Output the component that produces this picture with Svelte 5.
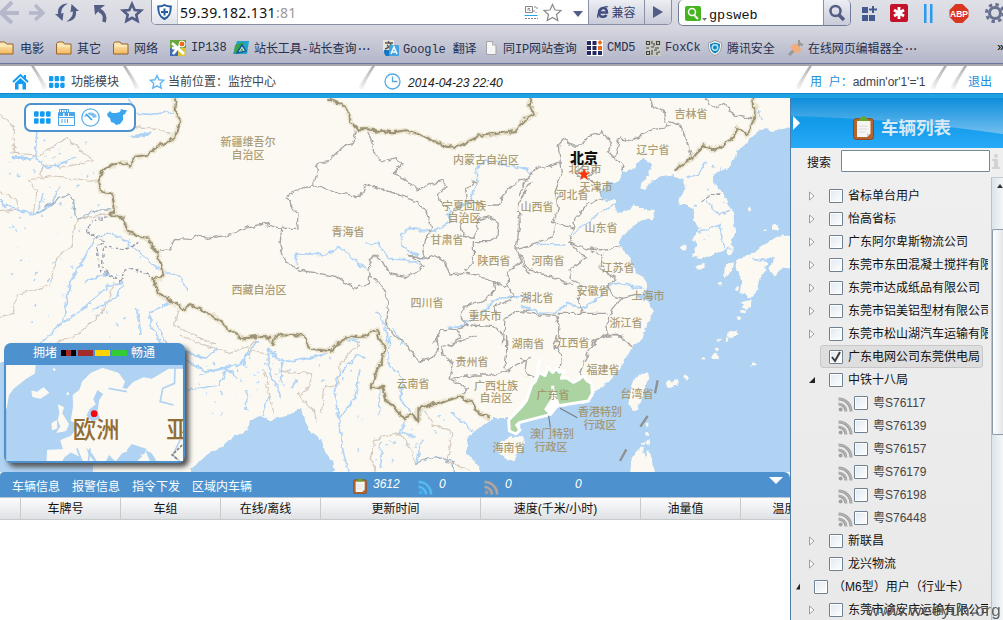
<script>
  const bookmarks = [
    { kind: 'folder', w: 58, g: 22, text: '电影' },
    { kind: 'folder', w: 57, g: 21, text: '其它' },
    { kind: 'folder', w: 57, g: 21, text: '网络' },
    { kind: 'ip', w: 63, g: 21, text: 'IP138' },
    { kind: 'tool', w: 150, g: 21, text: '站长工具-站长查询', more: true },
    { kind: 'google', w: 102, g: 20, text: 'Google 翻译' },
    { kind: 'doc', w: 102, g: 18, text: '同IP网站查询' },
    { kind: 'cmd', w: 58, g: 20, text: 'CMD5' },
    { kind: 'qr', w: 63, g: 20, text: 'FoxCk' },
    { kind: 'guard', w: 80, g: 19, text: '腾讯安全' },
    { kind: 'hammer', w: 203, g: 20, text: '在线网页编辑器全', more: true }
  ];
  const tree = [
    { t: '省标单台用户', a: 1 }, { t: '怡高省标', a: 1 }, { t: '广东阿尔卑斯物流公司', a: 1 },
    { t: '东莞市东田混凝土搅拌有限公司', a: 1 }, { t: '东莞市达成纸品有限公司', a: 1 },
    { t: '东莞市铝美铝型材有限公司', a: 1 }, { t: '东莞市松山湖汽车运输有限公司', a: 1 },
    { t: '广东电网公司东莞供电局', sel: true }, { t: '中铁十八局', a: 2 },
    { t: '粤S76117', kid: true }, { t: '粤S76139', kid: true }, { t: '粤S76157', kid: true },
    { t: '粤S76179', kid: true }, { t: '粤S76198', kid: true }, { t: '粤S76448', kid: true },
    { t: '新联昌', a: 1 }, { t: '龙兴物流', a: 1 }, { t: '（M6型）用户（行业卡）', top: true },
    { t: '东莞市渝安庆运输有限公司', a: 1 }
  ];
  const columns = [
    ['', 21], ['车牌号', 100], ['车组', 100], ['在线/离线', 100], ['更新时间', 160],
    ['速度(千米/小时)', 160], ['油量值', 100], ['温度值', 110]
  ];
  const labels = [
    ['新疆维吾尔', 248, 142], ['自治区', 248, 155], ['内蒙古自治区', 486, 160], ['青海省', 348, 232],
    ['宁夏回族', 464, 206], ['自治区', 464, 218], ['甘肃省', 447, 240], ['陕西省', 494, 261],
    ['西藏自治区', 259, 290], ['四川省', 427, 303], ['重庆市', 485, 316], ['吉林省', 691, 114],
    ['辽宁省', 653, 150], ['北京市', 585, 169], ['天津市', 596, 187], ['河北省', 572, 195],
    ['山西省', 537, 207], ['山东省', 601, 228], ['河南省', 548, 261], ['江苏省', 618, 268],
    ['安徽省', 593, 291], ['湖北省', 537, 298], ['上海市', 648, 296], ['浙江省', 626, 323],
    ['湖南省', 528, 344], ['江西省', 573, 343], ['福建省', 603, 370], ['贵州省', 472, 362],
    ['云南省', 413, 384], ['广西壮族', 496, 386], ['自治区', 496, 398], ['广东省', 553, 395],
    ['台湾省', 637, 394], ['香港特别', 600, 412], ['行政区', 600, 425], ['澳门特别', 552, 434],
    ['行政区', 551, 447], ['海南省', 509, 448]
  ];
  // Map tiles: every tile is drawn in thirds of a pixel from its own origin.
  const tiles = [
    {
      x: 0, y: 95,
      border: ['525,10 528,50 540,75 525,130 480,150 440,180 405,185 390,215 365,203 335,212 308,225 295,260 305,292 335,295 342,325 345,350 325,355 370,370 380,405 420,425 445,428 455,455 475,475 480,505 490,540 480,552 460,548 472,590 500,612 530,628 555,645 565,630 600,640 655,675 685,705 730,730 780,725'],
      prov: ['810,385 745,395 690,420 620,430 600,418 570,433 525,430 508,465 480,468'],
      dash: ['325,365 275,375 260,408 310,440 292,460 298,525 360,558 375,525 400,520 455,545', '418,442 370,463 310,455 308,510 325,540'],
      river: ['110,110 105,185 145,220 230,185', '35,185 90,190 105,180', '0,320 50,345 110,358 150,335 180,275', '110,358 130,295', '330,415 290,425 270,460 240,510 210,560 190,680 115,750', '335,415 380,440 470,520 540,545 565,590', '370,560 320,575 250,640 190,685', '410,640 420,720', '510,625 450,650 450,690 490,750', '410,55 450,58 530,50', '470,680 500,750', '330,535 250,560', '385,10 400,40', '0,315 20,340', '370,565 345,610 280,645'],
      tan: ['0,55 40,95 40,175 120,180 200,130 240,160', '85,255 150,245 290,258', '85,255 110,290 100,355', '345,355 240,370 220,400 215,450 170,490 150,570 50,600 40,655 0,665', '400,95 470,100 520,125', '120,250 130,210 200,215 280,195 240,165', '345,560 310,650 230,720 170,745', '540,640 520,690 600,730 650,750', '0,350 55,345 50,315 0,290'],
      blue: ['110,355 125,345 180,310 205,297 220,310 225,355 232,375 290,345 340,345']
    },
    {
      x: 260, y: 95,
      border: ['205,10 255,35 275,85 295,103 320,103 400,112 440,106 485,120 540,148 590,157 660,122 700,118 765,108 790,80 810,68', '0,725 30,728 38,750', '40,730 70,718 130,722 150,762'],
      prov: ['290,105 280,145 250,155 200,200 175,205 165,260 155,270', '320,103 340,150 340,170 365,200 410,188 425,210 400,235 430,250 475,285 515,265 550,255 558,275 535,295 545,330 570,345', '80,300 155,270 230,290 300,308 315,268 375,285 420,300 470,320 500,350 515,400 500,430 485,470 495,490 520,480 555,500 570,540 620,535 650,540 700,560 745,578 765,605 725,625 700,635 710,655', '80,300 95,340 115,355 110,400 65,400 0,385', '65,400 60,450 75,500 120,525 230,545 285,580 325,565 330,540 325,510 345,480 370,500 390,535 435,545 470,530 495,510 445,480 495,490', '330,540 365,570 385,620 380,690 400,720 440,750', '650,265 640,258 615,290 620,320 660,325 690,330 715,330 730,300 770,260 810,250', '600,380 610,420 640,430 655,400 650,375 690,365 715,385 710,425 690,440 640,440 640,500 615,530', '810,260 775,330 778,400 768,460 785,500 745,530 745,578', '768,460 810,450', '785,500 810,540', '700,560 705,585 670,620 610,635 600,665 625,690 590,700 545,705 520,745', '590,700 600,730 570,750', '730,750 735,670 770,650 810,645', '630,690 700,695 730,720'],
      dash: [],
      river: ['315,447 355,445 385,490 440,495 490,512', '490,495 425,450 425,415 450,400 515,410 575,380 565,355 630,320 650,270 650,220 680,195 740,210 810,225', '110,508 108,475 200,480 235,455 270,480 325,530', '565,698 610,690 650,665 710,610 780,605 810,610', '350,650 375,690 385,750', '235,750 270,730 300,745', '400,700 430,750'],
      tan: [], blue: []
    },
    {
      x: 520, y: 95,
      border: ['0,95 15,72 45,55 28,35 35,8', '700,8 705,70 690,100 680,120 655,98 640,125 610,150 580,165 550,150 520,188 490,205 467,228'],
      prov: ['390,10 400,35 430,50 435,75 445,95', '555,10 580,40 615,25 640,60 700,72', '445,80 480,90 500,140 515,185', '445,95 400,100 360,125 320,140 300,125 285,190 310,210 310,232', '285,190 265,170 275,140 245,112 205,125 185,150 150,150 135,130 115,150 120,200 80,215 50,220 20,250 0,300', '120,200 125,240 105,290 115,340 100,380 160,400 165,370 200,330 250,310', '160,400 145,440 200,462 260,465 295,450', '105,385 100,425 0,460', '145,440 200,490 150,520 155,555 180,570 175,610 185,655 260,655', '200,462 245,480 240,520 290,550 265,570 275,600 305,610 350,600', '305,610 280,640 260,690 265,720 310,725', '0,480 30,525 110,550 160,570', '0,650 60,660 110,665 120,655 185,655', '110,665 120,690 115,750', '265,720 220,740 215,750', '190,215 165,230 180,250 215,240 225,220', '200,250 225,265 245,300'],
      dash: ['545,320 565,303 605,295'],
      river: ['0,215 25,220 25,240', '285,325 240,355 190,390 160,420', '50,448 140,450', '0,630 60,655 105,655 140,625 190,640 215,625 280,565 370,580', '560,320 600,360 630,345', '535,410 600,390 610,460', '500,250 535,240 560,200', '715,45 725,75', '700,490 745,500 760,485'],
      tan: [], blue: []
    },
    {
      x: 0, y: 335,
      border: [],
      prov: [],
      dash: [],
      river: ['550,70 620,110 680,100 710,130', '600,120 680,95 720,90 770,20', '550,50 620,70 650,40', '730,90 740,50', '680,100 660,150 560,165', '740,165 735,225'],
      tan: ['540,0 600,25 690,55 740,35', '780,0 740,45 810,60', '790,110 810,150'], blue: []
    },
    {
      x: 260, y: 335,
      border: ['38,30 45,5', '150,42 210,48 240,20 270,5 310,5 325,0 350,-15 360,15 375,30 365,80 345,115 335,160 370,155 380,200 400,210 430,250 460,240 475,260 475,220 530,205 600,185 640,205 655,235 690,248'],
      prov: ['440,30 475,80 515,70 535,40 530,0', '650,0 600,20 545,35 550,60 580,90 570,130 625,160 600,185', '575,130 640,120 700,120 740,105 810,70', '740,0 740,50 735,100'],
      dash: [],
      river: ['20,40 60,75 100,80 200,55 240,20 300,10', '65,80 65,150', '25,50 30,110 65,190', '315,70 290,60 230,130 225,190 240,260 245,330 265,410', '390,0 385,90 430,130 420,190 455,240', '470,310 420,290 440,250', '490,310 470,380', '360,320 365,400', '575,230 640,290', '300,100 285,190 240,250', '10,240 25,180', '115,130 95,160', '360,160 355,240'],
      tan: ['70,110 155,115 150,150 115,180 160,230 170,260', '300,20 240,90 235,150 190,160 185,230', '490,220 520,270 580,290 560,380 640,411', '470,390 450,340 420,295 345,310 330,370 350,411', '20,150 40,240'],
      blue: ['465,385 525,365 580,380 580,411']
    },
    {
      x: 520, y: 335,
      border: [],
      prov: ['110,0 100,30 125,60 120,100', '0,70 20,75 15,110 40,130', '250,0 210,40 190,90 180,130', '250,5 300,0 340,40'],
      dash: [], river: [], tan: [], blue: []
    }
  ];
  const coast = '790,127 773,131 765,128 756,132 747,142 738,150 736,158 725,169 713,175 713,182 722,193 733,212 735,232 730,247 720,252 712,255 703,258 692,257 697,247 693,238 698,228 693,217 695,210 688,205 678,205 679,197 687,188 683,180 675,175 663,177 653,180 643,190 639,188 648,175 652,165 645,158 637,163 632,170 623,172 618,183 608,183 600,195 607,201 615,200 615,207 617,213 628,210 635,205 645,210 655,211 652,218 638,222 632,228 625,233 618,245 628,255 635,272 645,280 647,291 637,295 648,302 653,312 647,325 643,337 630,350 618,372 608,382 595,393 588,402 555,407 548,413 520,423 518,433 512,435 509,418 493,418 480,427 467,438 467,453 480,468 481,472 790,472';
  const bengal = '260,416 270,420 290,415 300,409 305,418 310,432 322,440 325,452 332,460 334,472 190,472 200,460 213,452 233,438 248,430 250,420';
  const specks = [];
  let seed = 17;
  const rnd = () => (seed = (seed * 1103515245 + 12345) % 2147483648) / 2147483648;
  function scatter(n, x, y, w, h) {
    for (let i = 0; i < n; i++) {
      const px = x + rnd() * w, py = y + rnd() * h;
      specks.push(`M${px.toFixed(1)} ${py.toFixed(1)}l${(rnd() * 3 - 0.5).toFixed(1)} ${(-rnd() * 2.4).toFixed(1)}`);
    }
  }
  scatter(42, 5, 140, 95, 95);
  scatter(34, 5, 240, 135, 100);
  scatter(26, 188, 350, 70, 70);
  scatter(28, 262, 350, 90, 55);
  scatter(24, 340, 410, 120, 58);
  scatter(16, 685, 165, 40, 80);
  const isles = [[749, 209, 2], [775, 227, 3], [765, 230, 1.5], [684, 248, 2.5], [730, 252, 2.5], [731, 247, 2], [747, 305, 4], [743, 311, 2], [739, 318, 2], [734, 333, 3], [727, 340, 2], [720, 284, 1.5], [737, 289, 2], [731, 335, 3], [715, 357, 3], [717, 350, 2], [719, 340, 1.5], [703, 359, 1.5], [754, 365, 1.5], [670, 384, 4], [675, 382, 2.5], [686, 378, 2.5], [646, 425, 1.5], [647, 433, 2], [643, 444, 2], [648, 443, 2], [641, 450, 2.5], [648, 454, 2.5]];
</script>

{#snippet rss(color)}
  <svg class="rss" width="15" height="15" viewBox="0 0 15 15" fill="none" stroke={color}>
    <circle cx="2.6" cy="12.6" r="2" fill={color} stroke="none" />
    <path d="M.5 7c4 0 7.400 3.200 7.400 7.400M.5 2c7 0 12.500 5.400 12.500 12.400" stroke-width="3" />
    <path d="M.5 6.800c4 0 7.600 3.400 7.600 7.600M.5 1.800c7 0 12.700 5.400 12.700 12.600" stroke="#fff" stroke-opacity=".35" stroke-width=".7" />
  </svg>
{/snippet}

{#snippet clip(size)}
  <svg width={size} height={size * 1.15} viewBox="0 0 21 24">
    <rect x=".5" y="2.500" width="20" height="21" rx="3" fill="#b4642c" stroke="#8e481d" />
    <path d="M4 5h13.500v12.500L14 21H4z" fill="#f6f6f4" />
    <path d="M5.500 10h9M5.500 13h9M5.500 16h7" stroke="#cfd2d2" stroke-width=".8" />
    <path d="M14 21v-3.500h3.500" fill="#d5d5d5" />
    <path d="M5.500 5C6 2 8.500 2 9 .8q1.500-1 3 0c.5 1.200 3 1.200 3.500 4.200z" fill="#63a82b" />
  </svg>
{/snippet}

{#snippet grid(size)}
  <svg width={size} height={size * 0.78} viewBox="0 0 17 13" fill="#149cf3">
    {#each [0, 6, 12] as gx}{#each [0, 7] as gy}<rect x={gx} y={gy} width="4.600" height="5.500" rx="1.200" />{/each}{/each}
  </svg>
{/snippet}

{#snippet slash(flip)}
  <svg class="slash" class:flip width="22" height="28" viewBox="0 0 22 28">
    <path d="M2 0H5L18 20V23H14Q11 14 2 0Z" fill="url(#fold)" />
  </svg>
{/snippet}

<svg class="defs" width="0" height="0">
  <defs>
    <linearGradient id="fold" x1="0" y1="0" x2=".9" y2="1"><stop offset="0" stop-color="#aaa" /><stop offset="1" stop-color="#f5f5f5" /></linearGradient>
    <linearGradient id="fd" x1="0" y1="0" x2="0" y2="1"><stop offset="0" stop-color="#fff0c0" /><stop offset="1" stop-color="#f3b75f" /></linearGradient>
    <filter id="rough" filterUnits="userSpaceOnUse" x="0" y="90" width="800" height="390" color-interpolation-filters="sRGB">
      <feTurbulence type="fractalNoise" baseFrequency=".16" numOctaves="2" seed="4" />
      <feDisplacementMap in="SourceGraphic" scale="6" xChannelSelector="R" yChannelSelector="G" />
    </filter>
  </defs>
</svg>

<div class="page">
  <div class="chrome">
    <div class="toolbar">
      <svg class="nav" width="151" height="26" viewBox="0 0 151 26" fill="none">
        <path d="M12 2 1 13l11 10M2 13h17" stroke="#b4b8ca" stroke-width="4" />
        <path d="m35 5 8 8-8 7M29 13h13" stroke="#b4b8ca" stroke-width="3.500" />
        <path d="M68 3.500Q57 4 58 14l-3 0 7.500 7 1-8-2.500.5Q61 7 68 3.500z" fill="#535d85" />
        <path d="M66 21.500Q77 21 76 11l3 0-7.500-7-1 8 2.500-.5Q73 18 66 21.500z" fill="#535d85" />
        <path d="M104 22c2-6 0-9-5-12" stroke="#535d85" stroke-width="3.800" /><path d="M94 5h11q-2 2-4 3l-6 7z" fill="#535d85" />
        <path d="m132 4 2.700 6 6.300.6-4.700 4.200 1.300 6.200-5.600-3.200-5.600 3.200 1.300-6.200-4.700-4.200 6.300-.6z" stroke="#535d85" stroke-width="2.600" />
      </svg>
      <div class="address">
        <span class="shield"><svg width="15" height="16" viewBox="0 0 15 16"><path d="M7.500 1C5 2.500 3 2.500 1.200 2.500c0 6 1 10 6.300 12.500 5.300-2.500 6.300-6.500 6.300-12.500C12 2.500 10 2.500 7.500 1z" fill="#fff" stroke="#265e9d" stroke-width="2" /><path d="M7.500 4.500v7M4 8h7" stroke="#265e9d" stroke-width="2" /></svg></span>
        <span class="url">59.39.182.131<i>:81</i></span>
        <svg width="64" height="24" viewBox="524 0 64 24" fill="none"><path d="M525.500 6.500h7v6h-7z" stroke="#888" /><path d="M528 8.500h2v2h-2zM535 6v2M537 7v3M534 10v3M536 12v1M525 18.500h13" stroke="#888" stroke-dasharray="2 1" /><path d="M524.500 15.500h13" stroke="#23a5e5" /><path d="m552.500 4.500 2.500 5.500 6 .5-4.500 4 1.300 6-5.300-3-5.300 3 1.300-6-4.500-4 6-.5z" stroke="#898989" stroke-width="1.200" /><path d="M573 11h10l-5 6z" fill="#535d85" /></svg>
        <span class="compat"><svg width="12" height="14" viewBox="0 0 12 14" fill="none" stroke="#414f80" stroke-width="2.500"><path d="M2 7.500h8C10 1 2 2 2 7.500s6 5 7.500 2.500" /><path d="M1 13C-1 9 7 0 11 2" stroke-width="1.200" /></svg><span>兼容</span></span>
        <span class="play"><svg width="10" height="12"><path d="M0 0v12l10-6z" fill="#535d85" /></svg></span>
      </div>
      <div class="finder">
        <svg width="24" height="24" viewBox="0 0 24 24" fill="none"><rect x="1" y="5" width="16" height="15" rx="2" fill="#45b41e" /><circle cx="8" cy="11" r="3.500" stroke="#fff" stroke-width="1.500" /><path d="m10 14 4 4" stroke="#fff" stroke-width="2" /><path d="M18 17h5l-2.500 3z" fill="#777" /></svg>
        <span>gpsweb</span>
        <b><svg width="18" height="19" fill="none" stroke="#535d85"><circle cx="7.500" cy="8" r="5" stroke-width="2.500" /><path d="m11 12 5 5" stroke-width="3.500" /></svg></b>
      </div>
      <svg width="151" height="26" viewBox="852 0 151 26">
        <path d="M862 7h6v6h-6zm0 8h6v6h-6zm7 0h6v6h-6zM872 6h2v2.500h3v2h-3V13h-2v-2.500h-3v-2h3z" fill="#455a91" />
        <rect x="890" y="4" width="18" height="18" rx="2" fill="#c3122a" /><path d="M899 7v12M894 10l10 6M904 10l-10 6" stroke="#fff" stroke-width="2.800" />
        <path d="M924 4h2.500v19H924zM930 4h2.500v19H930z" fill="#2a9aec" />
        <path d="M955.500 4h7l6 6v7l-6 6h-7l-6-6v-7z" fill="#d93621" /><text x="959" y="16.500" text-anchor="middle" font-family="Liberation Sans" font-size="8.500" font-weight="bold" fill="#fff">ABP</text>
        <circle cx="995" cy="13" r="8.500" fill="none" stroke="#68708f" stroke-width="3" stroke-dasharray="3.400 3.300" /><circle cx="995" cy="13" r="5.500" fill="none" stroke="#68708f" stroke-width="3" />
      </svg>
    </div>
    <div class="marks">
      {#each bookmarks as b}
        <div class="mark" style="width:{b.w}px">
          <span style="width:{b.g}px">
            <svg width="16" height="16" viewBox="0 0 16 16">
              {#if b.kind === 'folder'}
                <path d="M.5 3.500 2 2h5l1.500 2H15v10H.5z" fill="url(#fd)" stroke="#98652f" /><path d="M2 6h12" stroke="#fff3cf" />
              {:else if b.kind === 'ip'}
                <path d="M0 0h16v16H0z" fill="#68a83b" /><path d="M0 8h8v8H0z" fill="#426db4" /><path d="M8 8h8v8H8z" fill="#d8c63b" /><path d="M2 3 14 14M3 14l8-10M2 8l8 1" stroke="#fff" stroke-width="2.700" /><circle cx="12" cy="4" r="3" fill="#ef6b22" stroke="#fff" />
              {:else if b.kind === 'tool'}
                <path d="M4 1h12l-2 13H0z" fill="#20a4c8" /><path d="M2 5 11 2 8 13H1z" fill="#36a24c" /><path d="m4 13 5-8 4 6z" fill="#f5fae6" stroke="#17579a" stroke-width="1.500" /><path d="m7 11 2-3 1.500 2.500z" fill="#36a24c" />
              {:else if b.kind === 'google'}
                <rect width="11" height="11" fill="#e9e7da" /><path d="M2 3h8M5.500 1v2M8 3c0 3-3 5-6 6M4 5l4 4" stroke="#555" stroke-width="1.400" fill="none" /><path d="M1 10h5v4l3-3v5H4q-3 0-3-6z" fill="#1375c5" /><rect x="6" y="5" width="10" height="11" rx="1" fill="#42a3e2" /><path d="m8 14 3-7 3 7M9 12h4" fill="none" stroke="#fff" stroke-width="1.500" />
              {:else if b.kind === 'doc'}
                <path d="M1.500 1.500H7.500l3.500 3.500v9.500H1.500z" fill="#f5f5f5" stroke="#a2a2a8" /><path d="M7.500 1.500V5H11" fill="#ddd" stroke="#aaa" />
              {:else if b.kind === 'cmd'}
                <path d="M0 0h16v16H0z" fill="#fff" /><path d="M0 1h4v4H0zM5.500 1h4v4h-4zM0 6h4v4H0zM5.500 6h4v4h-4zM0 11h4v4H0zM5.500 11h4v4h-4zM11 11h4v4h-4z" fill="#242963" /><path d="M11 6h4v4h-4zM13 0l2.500 2.500L13 5l-2.500-2.500z" fill="#f26a10" />
              {:else if b.kind === 'qr'}
                <path d="M0 0h16v16H0z" fill="#c9c9c4" /><path d="M1.500 1.500h3v3h-3zM11.500 1.500h3v3h-3zM1.500 11.500h3v3h-3zM7 1v3M9 3v3M6 7h3M10 8h4M7 10v5M9 10h3M12 12v3M14 11v2M1 8h3" fill="none" stroke="#44443e" stroke-width="1.100" />
              {:else if b.kind === 'guard'}
                <path d="M7 .5 13.500 3c.4 7-1.500 10-6.500 12.500C2 13 .1 10 .5 3z" fill="#fafafa" stroke="#999" /><path d="M7 2.500 12 4c0 5-1 7.500-5 9.500C3 11.500 2 9 2 4z" fill="#1483bd" /><circle cx="7" cy="7.500" r="2.700" fill="none" stroke="#b0e6fa" stroke-width="1.500" />
              {:else}
                <path d="m1 15 12-12" stroke="#999" stroke-width="3" /><path d="M11 0v4l4 1" fill="none" stroke="#999" stroke-width="2" /><path d="m2 7 6-4 6 7-6 4z" fill="#f2ad7d" />
              {/if}
            </svg>
          </span><p>{b.text}{#if b.more}<i>···</i>{/if}</p>
        </div>
      {/each}
      <em>»</em>
    </div>
  </div>

  <header>
    <svg class="home" width="17" height="17" viewBox="0 0 17 17"><path d="m1 9 7.500-7L16 9M13 2v4" fill="none" stroke="#149cf3" stroke-width="2" /><path d="M8.500 5 14 10v6.500h-3.500V11h-4v5.500H3V10z" fill="#149cf3" /></svg>
    {@render slash(false)}
    <span class="gr">{@render grid(16)}</span>
    <span class="mod">功能模块</span>
    {@render slash(false)}
    <svg class="star" width="16" height="16" viewBox="0 0 16 16"><path d="m8 1.500 2 4.300 4.700.5-3.500 3.200 1 4.700L8 11.800l-4.200 2.400 1-4.700L1.300 6.300l4.700-.5z" fill="none" stroke="#62b6f4" stroke-width="1.400" /></svg>
    <span class="where">当前位置：监控中心</span>
    {@render slash(true)}
    <svg class="clock" width="17" height="17" viewBox="0 0 17 17" fill="none" stroke="#55aae9" stroke-width="1.300"><circle cx="8.500" cy="8.500" r="7.500" /><path d="M8.500 3.500v5h5" /></svg>
    <time>2014-04-23 22:40</time>
    {@render slash(true)}
    <span class="user"><b>用&nbsp; 户：</b>admin'or'1'='1</span>
    {@render slash(true)}{@render slash(true)}
    <span class="exit">退出</span>
  </header>

  <div class="body">
    <main>
      <section class="map">
        <svg class="canvas" width="790" height="374" viewBox="0 98 790 374">
          <rect y="98" width="790" height="374" fill="#fcf9f2" />
          <g filter="url(#rough)">
            <g fill="#b0d2f3">
              <polygon points={coast} /><polygon points={bengal} /><path d="M-5 363H6V460H92V476H-5zM128 136 140 134 152 131 146 137 136 138zM12 156l17 1 3 4-8-1-12-2z" />
              <path d="M790 120h10v357h-10zM330 468h-140v9h146zM480 468h315v9H483z" />
            </g>
            <g fill="#fcf9f2">
              <g transform="translate(520 95) scale(.33333)"><path d="M825 420 770 425 740 445 710 470 670 485 645 500 650 530 665 560 660 590 690 610 710 590 720 545 735 530 740 490 765 490 745 520 765 545 790 515 825 520zM615 510 640 502 632 535 612 545zM525 515 555 505 545 522 530 524zM665 620 695 615 690 638 672 635z" /></g>
              <g transform="translate(520 335) scale(.33333)"><path d="M380 108 385 130 365 185 345 232 330 215 325 185 345 130zM330 420 335 370 350 345 370 350 375 365 390 355 400 385 407 420zM440 145 470 138 455 155z" /></g>
              <path d="m523 436 2 8-11 16-7-1-11-9 5-8 10-5z" />
              {#each isles as [x, y, r]}<circle cx={x} cy={y} r={r} />{/each}
            </g>
            <path d={specks.join('')} fill="none" stroke="#b0d4f7" stroke-width="1.400" />
            {#each tiles as t}
              <g transform="translate({t.x} {t.y}) scale(.33333)" fill="none" stroke-linejoin="round">
                {#each t.tan as p}<polyline points={p} stroke="#d5c9bd" stroke-width="3.500" />{/each}
                {#each t.river as p}<polyline points={p} stroke="#b0d4f7" stroke-width="5" />{/each}
                {#each t.blue as p}<polyline points={p} stroke="#a0b4c8" stroke-width="4" />{/each}
                {#each t.dash as p}<polyline points={p} stroke="#9497a8" stroke-width="4" stroke-dasharray="10 7" />{/each}
                {#each t.prov as p}<polyline points={p} stroke="#a7a5a3" stroke-width="4" />{/each}
                {#each t.border as p}<polyline points={p} stroke="#ece6d2" stroke-width="16" />{/each}
                {#each t.border as p}<polyline points={p} stroke="#9c9376" stroke-width="6" />{/each}
              </g>
            {/each}
          </g>
          <g transform="translate(520 335) scale(.33333)">
            <path d="M45 140 58 112 75 122 84 98 98 112 110 100 118 112 134 106 124 130 140 128 160 142 176 134 190 122 202 138 215 145 217 175 205 198 110 213 92 238 0 262-10 270 0 285-12 297-32 288-34 255 5 215 20 195 35 150z" fill="#acd3a2" stroke="#fff" stroke-width="9" stroke-linejoin="round" />
            <path d="M60 72 45 140M98 152l3 65M105 180l10 30-25 25-12-12z" fill="#fff" stroke="#fff" stroke-width="9" />
            <path d="m120 220 52 28M86 242l5 35" stroke="#777f82" stroke-width="3.500" />
            <path d="m413 136-8 39M383 243l-22 32M319 343l-19 35" stroke="#8c9290" stroke-width="7" />
          </g>
          <g class="names">{#each labels as [t, x, y]}<text x={x} y={y + 4}>{t}</text>{/each}</g>
          <text x="584" y="163" class="capital">北京</text>
          <path d="m584 168 1.600 4.400h4.600l-3.700 2.900 1.400 4.600-3.900-2.700-3.900 2.700 1.400-4.600-3.700-2.900h4.600z" fill="#fb3409" />
        </svg>
        <div class="tools">
          {@render grid(17)}
          <svg width="17" height="17" viewBox="0 0 17 17" fill="none" stroke="#4aa5e8"><path d="M.5 3.500h16v13H.5zM1.500 3V.5h9V3M3.500 1v2M6 1v2M8.500 1v2" /><path d="M1 5.500h4M6.500 5.500h3.500M11 5.500h5" stroke-width="3" /><path d="M1 8.500h15M3 11h2M6 11h2M3 13h2M6 13h2M9.500 10v4" /></svg>
          <svg width="19" height="19" viewBox="0 0 19 19" fill="none"><circle cx="9.500" cy="9.500" r="8.700" stroke="#5daeea" stroke-width="1.300" /><path d="M3 9a7 7 0 0 1 13 0l-4 1a3 3 0 0 0-5-2z" fill="#83bfe9" /><path d="m5 5 5 6" stroke="#fff" stroke-width="2" /><path d="m5 6 6 6" stroke="#2499e7" stroke-width="1.400" /></svg>
          <svg width="20" height="17" viewBox="0 0 20 17"><path d="m0 5 3-3 2 2h4l4-1 1-3 3 1h3l-2 4-2 1v5l-3 4-4 1-2-2-3-1-1-4-2-1z" fill="#3ba5ef" /></svg>
        </div>
        <div class="mini">
          <div class="legend"><span>拥堵</span><i class="jam"></i><i class="slow"></i><i class="mid"></i><i class="free"></i><span>畅通</span></div>
          <svg width="177" height="96" viewBox="18 90 530 288">
            <path d="M18 90h530v288H18z" fill="#b0d2f3" />
            <g fill="#fcf9f2" stroke="#fcf9f2" stroke-width="3" stroke-linejoin="round">
              <path d="M18 90h87l-2 25-25 15-38 30-15 20-7 40zM95 168l15 4 20-14 16 15-25 17-23-5z" />
              <path d="m220 215-1-35 20-15 8-25 25-25 35-15 48 15 18 25-8 20 15 3 18-20 32-15 25 5 25-15 25-15h43v288H400l28-28-30-20-32 10-20 25-20-20-15 30-20-10-12-20-24-25 9 25 18 23-20 12-25-30-25-12-20 15-15 25h-37l2-45 48-2-8-28 30-12 18-22 8-15-25-10z" />
              <path d="m175 210 15 7-5 18 20 32-8 20-27 5 12-17-8-20 5-20zM155 265l14-8 1 22-13 6zM160 100l6 4-4 4zM200 180l3-8 3 5z" />
            </g>
            <path d="m292 165-13 28 8 15-18 14-10 18 17 20 24-10-8-20 5-35 12-18zM435 345l15 35h20l-15-25zM380 345l15-18 45 15-8 16-46 5z" fill="#b0d2f3" />
            <path d="m525 90-2 55-35 15-8 40 40 10M230 340l15 38M270 340l-5 38M380 170l-55-10M540 315l-22 45 20 18" fill="none" stroke="#b0d2f3" stroke-width="5" />
            <path d="m546 330-30 30 15 12" fill="none" stroke="#85817b" stroke-width="5" stroke-dasharray="9 4" />
            <text x="218" y="308">欧洲</text><text x="498" y="308">亚</text>
            <circle cx="282" cy="236" r="10" fill="#f60510" />
          </svg>
        </div>
      </section>
      <div class="bar">
        <nav><span>车辆信息</span><span>报警信息</span><span>指令下发</span><span>区域内车辆</span></nav>
        <span class="stat s1">{@render clip(14)}<em>3612</em></span>
        <span class="stat s2">{@render rss('#43b0ec')}<em>0</em></span>
        <span class="stat s3">{@render rss('#a09a98')}<em>0</em></span>
        <span class="stat"><em>0</em></span>
        <svg class="down" width="14" height="7"><path d="M0 0h14L7 7z" fill="#fff" /></svg>
      </div>
      <div class="head">
        {#each columns as [name, w]}<span style="width:{w}px">{name}</span>{/each}
      </div>
      <div class="rows"></div>
    </main>

    <aside>
      <div class="title">
        <svg class="gloss" width="212" height="50" viewBox="0 0 212 50"><defs><linearGradient id="gl" x1="0" x2="0" y1="0" y2="1"><stop offset="0" stop-color="#0d8ddb" /><stop offset="1" stop-color="#71bff0" /></linearGradient></defs><path d="M0 0h212v36Q100 20 0 18z" fill="url(#gl)" /><path d="m2 18 7 7-7 7z" fill="#fff" /></svg>
        <div>{@render clip(21)}<strong>车辆列表</strong></div>
      </div>
      <div class="search"><span>搜索</span><input aria-label="搜索" /><svg width="8" height="15" fill="#d3d3d3"><circle cx="4" cy="2" r="2" /><path d="M0 5h6v8h2v2H0v-2h2V7H0z" /></svg></div>
      <div class="panel">
        <div class="tree">
          {#each tree as r}
            <div class="row" class:kid={r.kid} class:top={r.top} class:sel={r.sel}>
              {#if r.kid}{@render rss('#a1a1a1')}
              {:else}
                <svg class="arrow" width="8" height="10" viewBox="0 0 8 10">
                  {#if r.top}<path d="M4 1.500v6H0z" fill="#222" />
                  {:else if r.a === 2}<path d="M7 2v6H1z" fill="#222" />
                  {:else if r.a}<path d="m1.500 1 4.500 4-4.500 4z" fill="#fff" stroke="#9d9d9d" />{/if}
                </svg>
              {/if}
              <i class="box">{#if r.sel}<svg width="12" height="12"><path d="m2 6 3 4 5-9" fill="none" stroke="#3c3c3c" stroke-width="2" /></svg>{/if}</i>
              <span>{r.t}</span>
            </div>
          {/each}
        </div>
        <div class="scroll"><svg width="11" height="51"><path d="M5 10h6L8 6z" fill="#333" /></svg><div class="thumb"></div></div>
      </div>
    </aside>
  </div>
  <div class="credit">www.weeyun.org</div>
</div>

<style>
  :global(body) { margin: 0; overflow: hidden; }
  .page { width: 1003px; height: 620px; overflow: hidden; position: relative; background: #fff; font: 12px/1.2 "Liberation Sans", "Noto Sans CJK SC", sans-serif; color: #111; display: flex; flex-direction: column; white-space: nowrap; }
  .page svg { flex: none; display: block; }
  .defs { position: absolute; }
  .chrome { height: 66px; box-sizing: border-box; background: linear-gradient(#e0e1e7, #d4d5de 45%, #b2b5c8); border-bottom: 2px solid #a5a6ab; box-shadow: inset 0 -1px #68779c; flex: none; }
  .toolbar { height: 27px; display: flex; align-items: flex-start; }
  .address { display: flex; align-items: center; width: 521px; height: 25px; box-sizing: border-box; border: 1px solid #8990a8; border-top: 0; border-radius: 0 0 5px 5px; background: #fff; overflow: hidden; }
  .shield { width: 25px; height: 25px; display: flex; align-items: center; justify-content: center; background: linear-gradient(#fff, #dfe2ea); border-right: 1px solid #bfc5d0; }
  .url { width: 344px; padding-left: 2px; font: 14px "Noto Sans", sans-serif; letter-spacing: .35px; }
  .url i { color: #999; font-style: normal; }
  .compat, .play { height: 25px; display: flex; align-items: center; justify-content: center; box-sizing: border-box; border-left: 1px solid #8990a8; background: linear-gradient(#eceef3, #c8cad8); color: #34416f; }
  .compat { width: 56px; gap: 2px; }
  .compat span { padding-top: 2px; }
  .play { width: 27px; }
  .finder { margin-left: 6px; width: 173px; height: 26px; margin-right: 1px; box-sizing: border-box; border: 1px solid #717a98; border-top: 0; border-radius: 5px; background: #fff; display: flex; align-items: center; overflow: hidden; padding-left: 5px; font: 13.500px "Liberation Mono", monospace; }
  .finder span { flex: 1; padding: 5px 0 0 1px; }
  .finder b { width: 26px; height: 26px; background: linear-gradient(#eceef3, #c8cad8); border-left: 1px solid #8990a8; display: flex; align-items: center; justify-content: center; }
  .marks { height: 36px; padding-top: 6px; box-sizing: border-box; display: flex; align-items: center; font: 12px "Liberation Mono", "Noto Sans CJK SC", monospace; color: #27304e; }
  .mark { display: flex; align-items: center; flex: none; letter-spacing: -.1px; }
  .mark:first-child { margin-left: -2px; }
  .mark span { flex: none; }
  .mark p { margin: 0; }
  .mark i { font-style: normal; letter-spacing: -3px; }
  .marks em { font-style: normal; margin-left: 6px; color: #000; }
  header { height: 32px; box-sizing: border-box; border-bottom: 4px solid #1fa1e4; box-shadow: inset 0 -1px #1189c9; display: flex; align-items: center; padding-top: 3px; color: #3b434d; flex: none; }
  header span { position: relative; top: 1px; }
  .home { margin-left: 12px; }
  .slash { align-self: flex-start; margin-top: -3px; }
  .flip { transform: scaleX(-1); }
  .gr { width: 21px; margin-left: -2px; margin-right: 1px; }
  .mod { width: 50px; }
  .star { margin-left: 6px; margin-right: 3px; }
  .where { width: 187px; }
  .clock { margin-left: 7px; }
  time { font-style: italic; font-size: 12px; margin: 4px 0 0 7px; width: 384px; color: #222; }
  .user { margin-left: -4px; width: 117px; }
  .user b, .exit { color: #198ee0; font-weight: normal; }
  .user ~ .slash + .slash { margin-left: -2px; }
  .exit { margin-left: -1px; }
  .body { flex: 1; display: flex; min-height: 0; }
  main { width: 790px; flex: none; overflow: hidden; display: flex; flex-direction: column; }
  .map { height: 374px; position: relative; flex: none; }
  .names text { font: 500 11px "Noto Sans CJK SC", sans-serif; fill: #a09066; fill-opacity: .9; text-anchor: middle; }
  .capital { font: 900 14px "Noto Sans CJK SC", sans-serif; text-anchor: middle; fill: #111; }
  .tools { position: absolute; left: 24px; top: 5px; width: 112px; height: 29px; box-sizing: border-box; border: 2px solid #4d92ce; border-radius: 7px; background: #fff; display: flex; align-items: center; gap: 6.500px; padding-left: 8px; }
  .mini { position: absolute; left: 4px; top: 245px; width: 181px; height: 120px; box-sizing: border-box; background: #4d92ce; border-radius: 7px; padding: 0 2px 2px; box-shadow: 4px 4px 5px #555; }
  .mini text { font: 500 70px "Noto Sans CJK SC", sans-serif; fill: #916e35; }
  .legend { height: 22px; display: flex; align-items: center; color: #fff; gap: 2px; padding: 0 0 2px 27px; box-sizing: border-box; }
  .legend span:first-child { margin-right: 2px; }
  .legend span:last-child { margin-left: 2px; }
  .legend i { width: 15px; height: 6px; }
  .jam { background: linear-gradient(90deg, #000 5px, #a52a2a 5px 10px, #000 10px); }
  .slow { background: #a52a2a; } .mid { background: #ffd400; } .free { background: #32cd32; }
  .bar { height: 25px; flex: none; background: #4d92ce; border-radius: 4px 6px 0 0; display: flex; align-items: flex-start; color: #fff; }
  nav { width: 342px; padding: 8px 0 0 12px; box-sizing: border-box; display: flex; gap: 12px; }
  .stat { display: flex; gap: 6px; padding: 6px 0 0 12px; width: 54px; }
  .stat em { margin-top: -1px; line-height: 14px; }
  .s1 { width: 64px; box-sizing: border-box; padding-left: 11px; }
  .s2 { width: 66px; box-sizing: border-box; padding-left: 12px; }
  .s3 { width: 91px; box-sizing: border-box; }
  .s2, .s3 { padding-top: 8px; }
  .s2 em, .s3 em { margin-top: -3px; }
  .down { margin: 5px 7px 0 auto; }
  .head { height: 23px; box-sizing: border-box; display: flex; flex: none; border-bottom: 1px solid #c8cacc; border-top: 1px solid #b9c6d1; background: linear-gradient(#fcfcfd, #dfe2e5); }
  .head span { box-sizing: border-box; flex: none; text-align: center; border-right: 1px solid #c8cacc; padding-right: 10px; line-height: 22px; }
  aside { width: 213px; box-sizing: border-box; border-left: 1px solid #4c7fae; background: linear-gradient(#f0f0f0, #e9e9e9); display: flex; flex-direction: column; }
  .title { height: 50px; background: linear-gradient(#139be9 50%, #29aaf8); position: relative; flex: none; }
  .gloss { position: absolute; inset: 0; }
  .title div { position: relative; display: flex; align-items: center; padding: 18px 0 0 62px; }
  .title strong { font: bold 17.500px/24px "Noto Sans CJK SC", sans-serif; margin: -2px 0 0 7px; color: #d9e8f7; }
  .search { height: 29px; display: flex; align-items: center; padding-left: 16px; box-sizing: border-box; flex: none; padding-top: 1px; }
  .search span { width: 34px; }
  .search input { width: 149px; height: 22px; box-sizing: border-box; border: 1px solid #74889b; border-radius: 1px; background: #fff; padding: 0; margin: -4px 0 0; outline: 0; }
  .search svg { margin: -3px 0 0 2px; }
  .panel { display: flex; flex: 1; min-height: 0; }
  .tree { width: 197px; padding-top: 7px; overflow: hidden; flex: none; }
  .row { height: 23px; display: flex; align-items: center; padding-left: 17px; overflow: hidden; box-sizing: border-box; }
  .arrow { margin-right: 13px; }
  .box { width: 14px; height: 14px; box-sizing: border-box; border: 1px solid #6e8193; border-radius: 1px; background: linear-gradient(135deg, #dfe8f0, #fff); box-shadow: inset 0 0 0 1px #fff; flex: none; margin-right: 5px; }
  .row span { line-height: 23px; padding-top: 1px; }
  .kid { padding-left: 47px; color: #454545; }
  .kid .box { margin: 0 5px 0 1px; }
  .kid .rss { margin-top: 4px; }
  .top { padding-left: 5px; }
  .top .arrow { margin-right: 10px; }
  .sel { height: 23px; padding-left: 8px; margin-left: 29px; width: 163px; border: 1px solid #c8c8c8; border-radius: 3px; background: #dedede; }
  .sel .arrow { display: none; }
  .scroll { margin-left: 3px; width: 12px; box-sizing: border-box; border-left: 1px solid #b9c2ca; border-top: 1px solid #c4cbd1; background: linear-gradient(90deg, #dce4ea, #f4f6f8); }
  .thumb { height: 206px; background: linear-gradient(90deg, #fff, #e3e6e8); border: 1px solid #8b9aa8; border-right: 0; box-sizing: border-box; border-radius: 2px 0 0 2px; }
  .credit { position: absolute; left: 867px; top: 601px; font-size: 17px; line-height: 20px; color: #555; letter-spacing: .4px; opacity: .9; }
</style>
